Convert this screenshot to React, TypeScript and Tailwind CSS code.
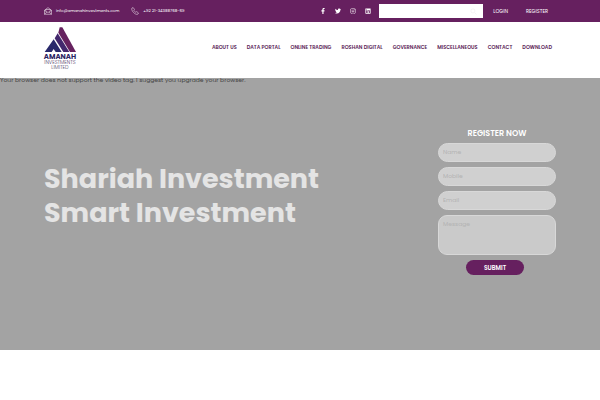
import { FaFacebookF, FaInstagram, FaLinkedin, FaTwitter } from "react-icons/fa";

const socialLinks = [
  { label: "Facebook", Icon: FaFacebookF },
  { label: "Twitter", Icon: FaTwitter },
  { label: "Instagram", Icon: FaInstagram },
  { label: "LinkedIn", Icon: FaLinkedin },
];

const navItems = [
  "About Us",
  "Data Portal",
  "Online Trading",
  "Roshan Digital",
  "Governance",
  "Miscellaneous",
  "Contact",
  "Download",
];

function MailIcon() {
  return (
    <svg viewBox="0 0 16 16" className="size-2 fill-none stroke-white stroke-1">
      <path d="M1 6.5 8 1.2l7 5.3v8H1z" />
      <path d="M3.5 8.2V5h9v3.2M1 7l7 4 7-4M1 14.5l5-4.6M15 14.5l-5-4.6" />
    </svg>
  );
}

function PhoneIcon() {
  return (
    <svg viewBox="0 0 16 16" className="size-2 fill-none stroke-white stroke-1">
      <path d="M4.2 1 1.6 2.5C.7 5 3 9 5.2 11.1c2.3 2.3 5.6 4.4 8.2 3.4L15 12l-3.6-2.8-1.9 1.3C8 9.8 6.3 8.2 5.6 6.5L7 4.8z" />
    </svg>
  );
}

function Logo() {
  return (
    <a href="#" aria-label="Amanah Investments Limited" className="flex w-8 flex-col items-center">
      <svg viewBox="0 0 96 75" className="h-[25px] w-8">
        <path d="M47 1 55 1 96 75H78L43 17Z" fill="#66225f" />
        <path d="M41 19 76 75H58L32 34Z" fill="#43286d" />
        <path d="M29 37 53 75H35L29 66 23 75H2Z" fill="#29296b" />
      </svg>
      <span className="mt-px text-[7px] leading-[7px] font-bold text-[#2b2463]">AMANAH</span>
      <span className="text-[5px] leading-[5px] font-light text-[#4d3a66]">INVESTMENTS</span>
      <span className="text-[5px] leading-[5px] font-light text-[#4d3a66]">LIMITED</span>
    </a>
  );
}

function TopBar() {
  return (
    <div className="flex h-[22px] items-center bg-[#66205f] px-11 text-[5px] leading-none text-white">
      <a href="mailto:info@amanahinvestments.com" className="flex items-center gap-1 text-[4px]">
        <MailIcon />
        info@amanahinvestments.com
      </a>
      <a href="tel:+922134388768" className="ml-3 flex items-center gap-1 text-[4px]">
        <PhoneIcon />
        +92 21-34388768-69
      </a>
      <div className="ml-auto flex items-center gap-[9px]">
        {socialLinks.map(({ label, Icon }) => (
          <a key={label} href="#" aria-label={label}>
            <Icon className="size-[6px]" />
          </a>
        ))}
      </div>
      <form className="ml-2 flex h-[14px] w-[104px] items-center bg-white pr-1.5">
        <input type="search" aria-label="Search" className="h-full min-w-0 flex-1 px-1 text-black outline-none" />
        <button type="button" aria-label="Search" className="flex">
          <svg viewBox="0 0 12 12" className="size-[7px] fill-none stroke-[#f0ecf0] stroke-1">
            <circle cx="5" cy="5" r="3.5" />
            <path d="m8 8 3 3" />
          </svg>
        </button>
      </form>
      <a href="#" className="ml-[10px]">LOGIN</a>
      <a href="#" className="mr-2 ml-[18px]">REGISTER</a>
    </div>
  );
}

function RegisterForm() {
  const field =
    "block w-full border border-[#d8d8d8] px-1 text-[6px] text-[#555] placeholder:text-[#b3b3b3] outline-none";

  return (
    <form className="flex w-[118px] flex-col gap-[5px]">
      <h2 className="text-center text-[8px] leading-[8px] font-semibold text-white">REGISTER NOW</h2>
      <input type="text" aria-label="Name" placeholder="Name" className={`${field} h-[19px] rounded-full bg-[#d0d0d0]`} />
      <input type="tel" aria-label="Mobile" placeholder="Mobile" className={`${field} h-[19px] rounded-full bg-[#d0d0d0]`} />
      <input type="email" aria-label="Email" placeholder="Email" className={`${field} h-[19px] rounded-full bg-[#d0d0d0]`} />
      <textarea
        aria-label="Message"
        placeholder="Message"
        className={`${field} h-10 resize-none rounded-[9px] bg-[#cacaca] py-1`}
      />
      <button
        type="button"
        className="mr-1 h-[15px] w-[58px] self-center rounded-full bg-[#66205f] text-[6px] leading-none font-semibold text-white"
      >
        SUBMIT
      </button>
    </form>
  );
}

export default function App() {
  return (
    <div className="min-h-screen bg-white font-['Poppins','Inter',sans-serif]">
      <header className="relative z-10 bg-white">
        <TopBar />
        <div className="flex h-14 justify-between px-11">
          <div className="pt-[5px]">
            <Logo />
          </div>
          <nav className="mr-1 flex items-center gap-2.5 pb-1.5 text-[5px] leading-none font-semibold text-[#5b2457] uppercase">
            {navItems.map((item) => (
              <a key={item} href="#" className="whitespace-nowrap">
                {item}
              </a>
            ))}
          </nav>
        </div>
      </header>

      <main className="h-[272px] bg-[#a3a3a3]">
        <p className="text-[6px] leading-[4px] text-[#444]">
          Your browser does not support the video tag. I suggest you upgrade your browser.
        </p>
        <div className="flex items-start justify-between px-11 pt-12">
          <h1 className="pt-8 text-[27px] leading-[34px] font-bold text-[#e4e4e4]">
            Shariah Investment
            <br />
            Smart Investment
          </h1>
          <RegisterForm />
        </div>
      </main>
    </div>
  );
}
